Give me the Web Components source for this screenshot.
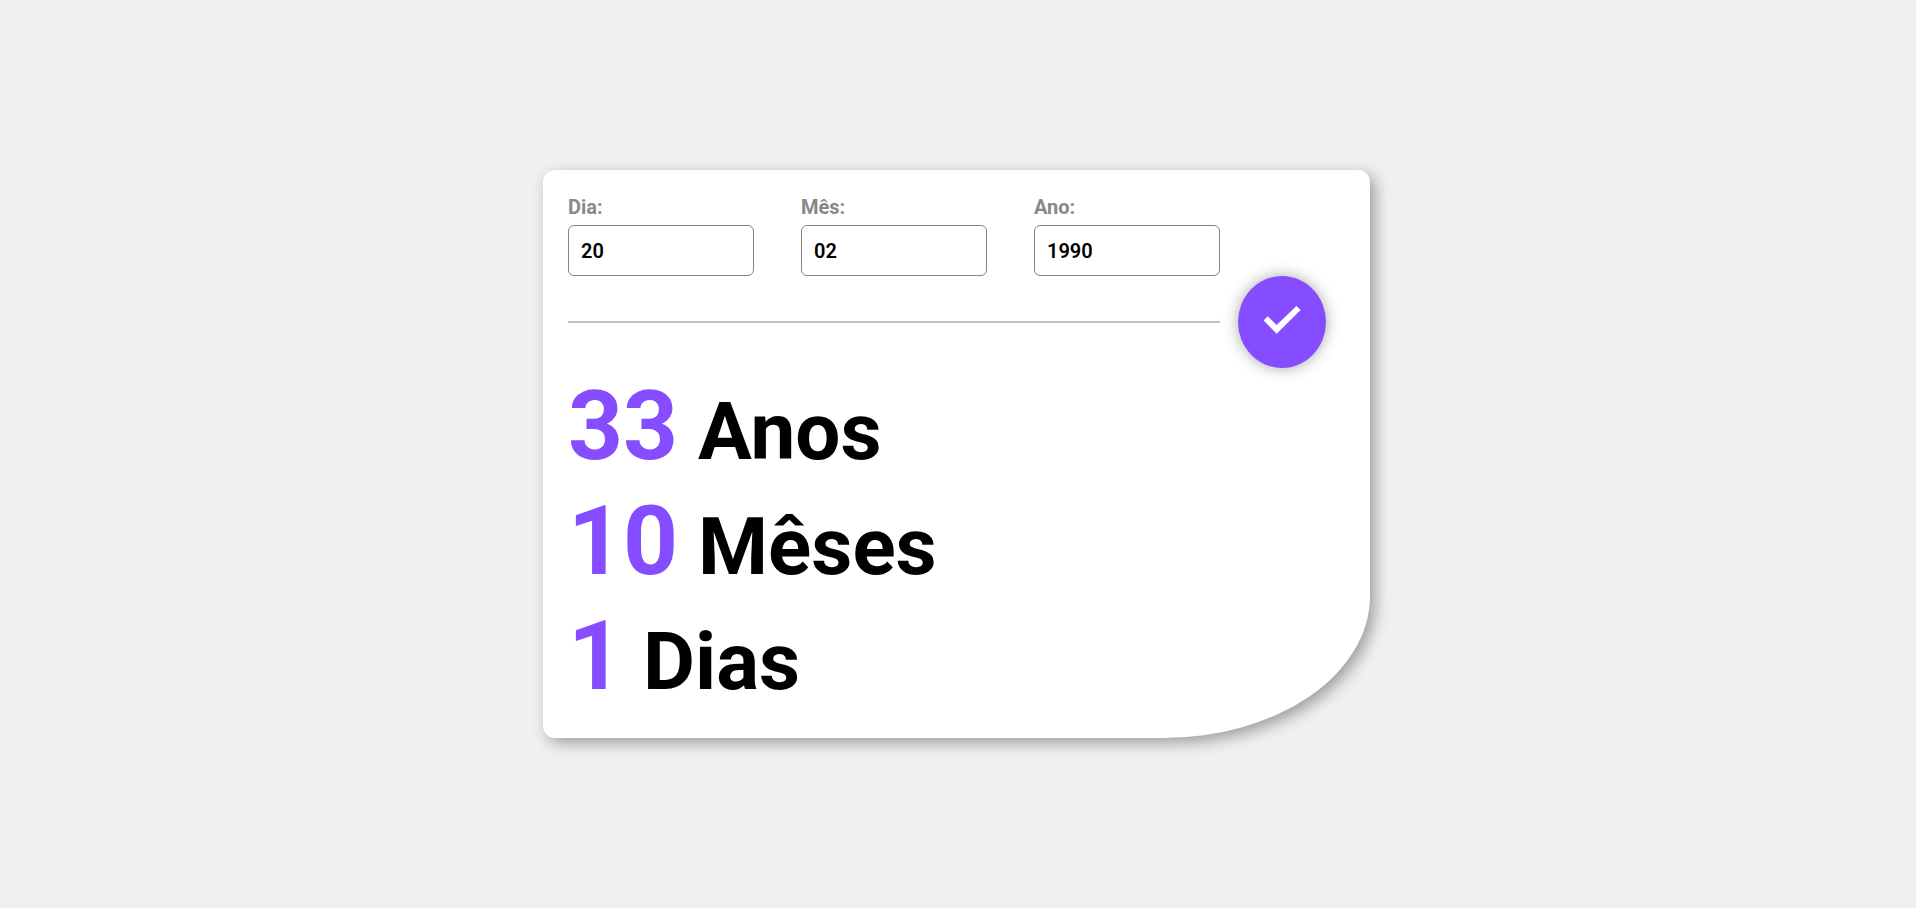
<!DOCTYPE html>
<html lang="pt-BR">
<head>
<meta charset="utf-8">
<meta name="viewport" content="width=device-width, initial-scale=1">
<title>Calculadora de idade</title>
<style>
body { margin: 0; background: #f0f0f0; font-family: Roboto, "Liberation Sans", sans-serif; }
</style>
</head>
<body>
<age-calculator></age-calculator>

<template id="age-calculator">
  <style>
    :host { display: flex; min-height: 100vh; align-items: center; justify-content: center; box-sizing: border-box; padding: 16px 19px 16px 16px; }
    form {
      box-sizing: border-box; width: 100%; max-width: 827px; padding: 25px 25px 24px;
      background: #fff; border-radius: 12px 12px 25% 12px;
      box-shadow: 5px 5px 15px rgba(0, 0, 0, .35);
    }
    .fields { display: grid; grid-template-columns: repeat(3, 1fr); gap: 47px; margin-right: 125px; }
    .action { display: flex; align-items: center; gap: 18px; margin: 0 19px 1px 0; }
    hr { flex: 1; height: 2px; margin: 0; border: 0; background: #bfbfbf; }
  </style>
  <form>
    <div class="fields">
      <date-field label="Dia:" value="20"></date-field>
      <date-field label="Mês:" value="02"></date-field>
      <date-field label="Ano:" value="1990"></date-field>
    </div>
    <div class="action">
      <hr>
      <check-button></check-button>
    </div>
    <age-result value="33">Anos</age-result>
    <age-result value="10">Mêses</age-result>
    <age-result value="1">Dias</age-result>
  </form>
</template>

<template id="date-field">
  <style>
    :host { display: flex; flex-direction: column; gap: 6px; min-width: 0; }
    label { font-size: 20px; line-height: 24px; font-weight: 700; color: #888; }
    input {
      box-sizing: border-box; width: 100%; height: 51px; padding: 0 12px;
      border: 1px solid #848484; border-radius: 6px; background: #fff;
      font-family: inherit; font-size: 20px; font-weight: 600; color: #000;
    }
  </style>
  <label for="value"></label>
  <input id="value" type="text" inputmode="numeric">
</template>

<template id="check-button">
  <style>
    :host { display: block; }
    button {
      display: flex; align-items: center; justify-content: center;
      width: 88px; height: 92px; padding: 0; border: 0; border-radius: 50%;
      background: #854dff; color: #fff; cursor: pointer;
      box-shadow: 0 0 15px rgba(0, 0, 0, .35);
    }
    svg { display: block; width: 48px; height: 48px; }
  </style>
  <button type="button" aria-label="Calcular">
    <svg viewBox="0 0 48 48" aria-hidden="true"><path fill="currentColor" d="M18.7 35.8 5.6 22.6 9.8 18.2l8.9 8.9L38.4 7.9l4.2 4.2z"/></svg>
  </button>
</template>

<template id="age-result">
  <style>
    :host { display: block; font-size: 96px; line-height: 115px; font-weight: 700; color: #000; }
    .number { color: #854dff; }
    .unit { font-size: 80px; line-height: 1; }
  </style>
  <span class="number"></span><span class="unit"> <slot></slot></span>
</template>

<script>
class TemplateElement extends HTMLElement {
  constructor() {
    super();
    const template = document.getElementById(this.localName);
    this.attachShadow({ mode: "open" }).append(template.content.cloneNode(true));
  }
}

customElements.define("date-field", class extends TemplateElement {
  connectedCallback() {
    this.shadowRoot.querySelector("label").textContent = this.getAttribute("label");
    this.shadowRoot.querySelector("input").value = this.getAttribute("value");
  }
});
customElements.define("check-button", class extends TemplateElement {});
customElements.define("age-result", class extends TemplateElement {
  connectedCallback() {
    this.shadowRoot.querySelector(".number").textContent = this.getAttribute("value");
  }
});
customElements.define("age-calculator", class extends TemplateElement {});
</script>
</body>
</html>
